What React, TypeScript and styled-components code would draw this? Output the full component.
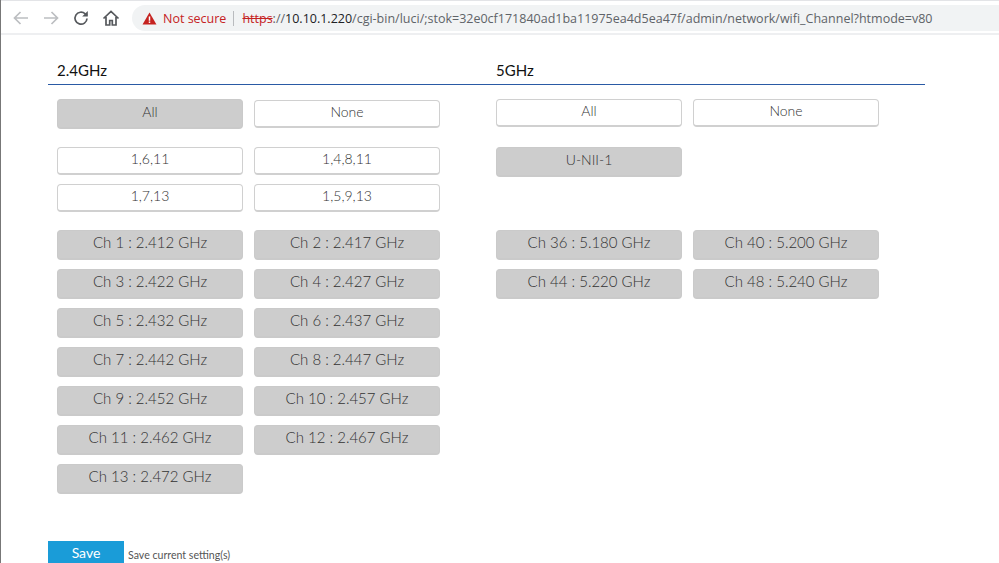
import { createGlobalStyle } from 'styled-components';
import styled from 'styled-components';

const GlobalStyle = createGlobalStyle`
  html, body {
    margin: 0;
    padding: 0;
    background: #fff;
    overflow: hidden;
  }
  body {
    font-family: Lato, "Liberation Sans", sans-serif;
  }
`;

const channels24 = [
  'Ch 1 : 2.412 GHz',
  'Ch 2 : 2.417 GHz',
  'Ch 3 : 2.422 GHz',
  'Ch 4 : 2.427 GHz',
  'Ch 5 : 2.432 GHz',
  'Ch 6 : 2.437 GHz',
  'Ch 7 : 2.442 GHz',
  'Ch 8 : 2.447 GHz',
  'Ch 9 : 2.452 GHz',
  'Ch 10 : 2.457 GHz',
  'Ch 11 : 2.462 GHz',
  'Ch 12 : 2.467 GHz',
  'Ch 13 : 2.472 GHz',
];

const channels5 = [
  'Ch 36 : 5.180 GHz',
  'Ch 40 : 5.200 GHz',
  'Ch 44 : 5.220 GHz',
  'Ch 48 : 5.240 GHz',
];

export default function App() {
  return (
    <>
      <GlobalStyle />
      <Window>
        <Toolbar>
          <NavIcon color="#bcbec1">
            <path d="M17 10H4M9.5 4 3.5 10l6 6" />
          </NavIcon>
          <NavIcon color="#bcbec1">
            <path d="M3 10h13M10.5 4l6 6-6 6" />
          </NavIcon>
          <NavIcon color="#55585c">
            <path d="M16 10.5a6 6 0 1 1-1.8-4.6L16 7.5" />
            <path d="M16.8 3v5.6h-5.6" fill="#55585c" stroke="none" />
          </NavIcon>
          <NavIcon color="#55585c">
            <path d="M2.5 10.5 10 3.5l7.5 7M5 9v8h3.7v-4.5h2.6V17H15V9" />
          </NavIcon>
          <AddressBar>
            <WarnIcon viewBox="0 0 16 14">
              <path d="M8 0.5 15.5 13.5H.5Z" fill="#c5221f" />
              <rect x="7.2" y="4.8" width="1.6" height="4.6" fill="#fff" />
              <rect x="7.2" y="10.2" width="1.6" height="1.6" fill="#fff" />
            </WarnIcon>
            <NotSecure>Not secure</NotSecure>
            <Divider />
            <Url>
              <Https>https</Https>
              <UrlMuted>://</UrlMuted>
              10.10.1.220
              <UrlMuted>/cgi-bin/luci/;stok=32e0cf171840ad1ba11975ea4d5ea47f/admin/network/wifi_Channel?htmode=v80</UrlMuted>
            </Url>
          </AddressBar>
        </Toolbar>
        <Page>
          <Headers>
            <BandTitle>2.4GHz</BandTitle>
            <BandTitle>5GHz</BandTitle>
          </Headers>
          <Bands>
            <Band>
              <ButtonGrid>
                <ChannelButton $selected>All</ChannelButton>
                <ChannelButton>None</ChannelButton>
              </ButtonGrid>
              <PresetGrid>
                <ChannelButton>1,6,11</ChannelButton>
                <ChannelButton>1,4,8,11</ChannelButton>
                <ChannelButton>1,7,13</ChannelButton>
                <ChannelButton>1,5,9,13</ChannelButton>
              </PresetGrid>
              <ChannelGrid>
                {channels24.map((c) => (
                  <ChannelTile key={c} $selected>
                    {c}
                  </ChannelTile>
                ))}
              </ChannelGrid>
            </Band>
            <Band>
              <ButtonGrid $top>
                <ChannelButton>All</ChannelButton>
                <ChannelButton>None</ChannelButton>
              </ButtonGrid>
              <PresetGrid>
                <ChannelButton $selected>U-NII-1</ChannelButton>
              </PresetGrid>
              <ChannelGrid>
                {channels5.map((c) => (
                  <ChannelTile key={c} $selected>
                    {c}
                  </ChannelTile>
                ))}
              </ChannelGrid>
            </Band>
          </Bands>
          <SaveRow>
            <SaveButton>Save</SaveButton>
            <SaveHint>Save current setting(s)</SaveHint>
          </SaveRow>
        </Page>
      </Window>
    </>
  );
}

function NavIcon(props: { color: string; children: React.ReactNode }) {
  return (
    <StyledNavIcon viewBox="0 0 20 20" stroke={props.color}>
      {props.children}
    </StyledNavIcon>
  );
}

const Window = styled.div`
  box-sizing: border-box;
  width: 999px;
  height: 563px;
  overflow: hidden;
  display: flex;
  flex-direction: column;
  background: #fff;
  border-left: 1px solid #777;
`;

const Toolbar = styled.div`
  height: 30px;
  flex: none;
  display: flex;
  align-items: center;
  padding: 2px 0 0 10px;
  border-top: 1px solid #e3e4e7;
  border-bottom: 2px solid #eeeff1;
  background: #fff;
`;

const StyledNavIcon = styled.svg`
  width: 20px;
  height: 20px;
  flex: none;
  margin-right: 10px;
  fill: none;
  stroke-width: 1.7;
`;

const AddressBar = styled.div`
  flex: 1;
  height: 26px;
  margin-left: 1px;
  padding-left: 10px;
  display: flex;
  align-items: center;
  background: #f1f3f4;
  border-radius: 13px 0 0 13px;
  white-space: nowrap;
  font-family: "Open Sans", "Liberation Sans", sans-serif;
`;

const WarnIcon = styled.svg`
  width: 15px;
  height: 13px;
  flex: none;
  margin-right: 6px;
`;

const NotSecure = styled.span`
  font-size: 12.5px;
  color: #c5221f;
`;

const Divider = styled.span`
  width: 1px;
  height: 15px;
  margin: 0 8px 0 7px;
  background: #b9bbbe;
`;

const Url = styled.span`
  font-size: 12.5px;
  color: #202124;
`;

const Https = styled.span`
  color: #c5221f;
  text-decoration: line-through;
`;

const UrlMuted = styled.span`
  color: #5f6368;
`;

const Page = styled.div`
  flex: 1;
  padding: 26px 0 0 47px;
`;

const Headers = styled.div`
  width: 877px;
  height: 24px;
  padding-left: 9px;
  box-sizing: border-box;
  display: grid;
  grid-template-columns: 439px 1fr;
  border-bottom: 1px solid #2a5aa5;
`;

const BandTitle = styled.div`
  font-size: 15px;
  line-height: 19px;
  color: #111;
`;

const Bands = styled.div`
  padding: 14px 0 0 9px;
  height: 456px;
  box-sizing: border-box;
  display: grid;
  grid-template-columns: 439px 383px;
`;

const Band = styled.div`
  display: flex;
  flex-direction: column;
`;

const ButtonGrid = styled.div<{ $top?: boolean }>`
  display: grid;
  grid-template-columns: 186px 186px;
  column-gap: 11px;
  align-items: ${(props) => (props.$top ? 'start' : 'center')};
  height: 30px;
  margin-bottom: -1px;
`;

const PresetGrid = styled.div`
  display: grid;
  grid-template-columns: 186px 186px;
  column-gap: 11px;
  row-gap: 9px;
  grid-auto-rows: 28px;
  margin-top: 19px;
  height: 65px;
`;

const ChannelGrid = styled.div`
  display: grid;
  grid-template-columns: 186px 186px;
  column-gap: 11px;
  row-gap: 9px;
  grid-auto-rows: 30px;
  margin-top: 18px;
`;

const ChannelButton = styled.div<{ $selected?: boolean }>`
  box-sizing: border-box;
  height: ${(props) => (props.$selected ? '30px' : '28px')};
  display: flex;
  align-items: center;
  justify-content: center;
  border-radius: 4px;
  font-size: 14px;
  font-weight: 300;
  color: #333;
  background: ${(props) => (props.$selected ? '#cdcdcd' : '#fff')};
  border: 1px solid ${(props) => (props.$selected ? '#cacaca' : '#d0d0d0')};
  border-bottom-width: 2px;
  padding-bottom: ${(props) => (props.$selected ? '5px' : '4px')};
`;

const ChannelTile = styled(ChannelButton)`
  font-size: 15px;
`;

const SaveRow = styled.div`
  display: flex;
  align-items: center;
  height: 22px;
`;

const SaveButton = styled.div`
  width: 76px;
  height: 22px;
  display: flex;
  align-items: center;
  justify-content: center;
  background: #1a9cd8;
  color: #fff;
  font-size: 14px;
  padding-top: 1px;
  box-sizing: border-box;
`;

const SaveHint = styled.span`
  margin-left: 4px;
  font-size: 10.6px;
  color: #555;
  padding-top: 5px;
`;
